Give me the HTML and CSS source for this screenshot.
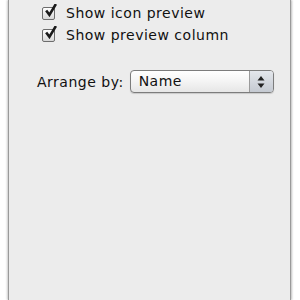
FILE: index.html
```html
<!DOCTYPE html>
<html lang="en">
<head>
    <meta charset="UTF-8">
    <title>View Options</title>
    <link rel="stylesheet" href="styles.css">
</head>
<body>

<div class="panel">
    <div class="options">
        <label class="check">
            <span class="box"><svg width="13" height="13" viewBox="0 0 12 12"><path d="M2 6 L5 10 L11 0" fill="none" stroke="#1a1a1a" stroke-width="2.4"/></svg></span>
            Show icon preview
        </label>
        <label class="check">
            <span class="box"><svg width="13" height="13" viewBox="0 0 12 12"><path d="M2 6 L5 10 L11 0" fill="none" stroke="#1a1a1a" stroke-width="2.4"/></svg></span>
            Show preview column
        </label>
    </div>

    <div class="arrange">
        <span class="arrange-label">Arrange by:</span>
        <div class="popup">
            <span class="popup-value">Name</span>
            <span class="popup-arrows">
                <svg width="8" height="12" viewBox="0 0 8 12"><path d="M4 0 L7.5 4.5 L0.5 4.5 Z M4 12 L7.5 7.5 L0.5 7.5 Z" fill="#222"/></svg>
            </span>
        </div>
    </div>
</div>

</body>
</html>
```

FILE: styles.css
```css
body {
    margin: 0;
    background-color: #ffffff;
    font-family: "DejaVu Sans", sans-serif;
    font-size: 14px;
    color: #111;
}
.panel {
    margin-left: 8px;
    width: 283px;
    height: 300px;
    box-sizing: border-box;
    background-color: #ececec;
    border-left: 1px solid #9a9a9a;
    border-right: 1px solid #9a9a9a;
    box-shadow: 1px 0 2px rgba(0, 0, 0, 0.25), -1px 0 2px rgba(0, 0, 0, 0.2);
    padding-top: 2px;
}
.options {
    padding-left: 33px;
}
.check {
    display: flex;
    align-items: center;
    gap: 11px;
    height: 22px;
    letter-spacing: 0.5px;
}
.box {
    width: 11px;
    height: 11px;
    border: 1px solid #6d6d6d;
    border-radius: 2px;
    background: linear-gradient(#ffffff, #d8d8d8);
    position: relative;
}
.box svg {
    position: absolute;
    left: 1px;
    top: -4px;
}
.arrange {
    display: flex;
    align-items: center;
    gap: 6px;
    margin-top: 24px;
    padding-left: 28px;
}
.arrange-label {
    letter-spacing: 0.5px;
}
.popup {
    display: flex;
    width: 144px;
    height: 23px;
    box-sizing: border-box;
    border: 1px solid #7c7c7c;
    border-radius: 4px;
    background: linear-gradient(#ffffff, #f4f4f4 50%, #e6e6e6);
    box-shadow: 0 1px 1px rgba(0, 0, 0, 0.15);
}
.popup-value {
    flex: 1;
    padding-left: 8px;
    line-height: 21px;
    letter-spacing: 0.5px;
}
.popup-arrows {
    width: 23px;
    border-left: 1px solid #9a9a9a;
    border-radius: 0 3px 3px 0;
    background: linear-gradient(#e4e7ec, #c4c9d1);
    display: flex;
    align-items: center;
    justify-content: center;
}
```
